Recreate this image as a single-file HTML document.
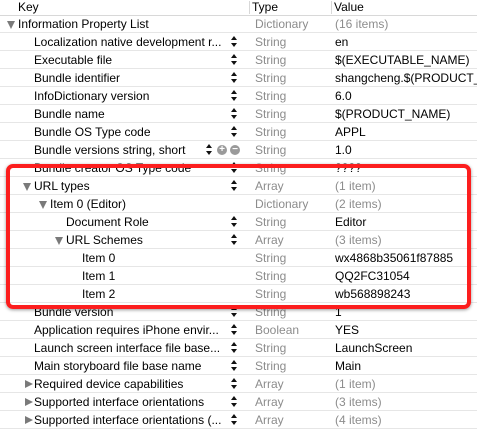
<!DOCTYPE html>
<html><head><meta charset="utf-8"><style>
body{margin:0;width:477px;height:438px;background:#fff;overflow:hidden;font-family:"Liberation Sans",sans-serif;font-size:12px;color:#000;position:relative}
.hdr{position:absolute;left:0;top:0;width:477px;height:15px;border-bottom:1px solid #d8d8d8;background:#fff}
.hdr span{position:absolute;top:0;line-height:15px;font-size:12px}
.sep{position:absolute;top:1px;width:1px;height:13px;background:#d8d8d8}
.row{position:absolute;left:0;width:477px;height:18px;border-bottom:1px solid #e6e6e6;box-sizing:border-box;overflow:hidden}
.row span{position:absolute;top:0;line-height:18px;white-space:nowrap}
.t{left:255px;color:#8c8c8c}
.v{left:335px}
.g{color:#8c8c8c}
.tri{position:absolute;top:6px;width:0;height:0}
.down{border-left:4.5px solid transparent;border-right:4.5px solid transparent;border-top:8px solid #7a7a7a}
.right{border-top:4.5px solid transparent;border-bottom:4.5px solid transparent;border-left:8px solid #7a7a7a;top:4.5px}
.st{position:absolute;left:231px;top:3px;width:7px;height:12px}
.st:before{content:"";position:absolute;left:0;top:0;border-left:3.5px solid transparent;border-right:3.5px solid transparent;border-bottom:4px solid #111}
.st:after{content:"";position:absolute;left:0;top:7px;border-left:3.5px solid transparent;border-right:3.5px solid transparent;border-top:4px solid #111}
.pm{position:absolute;top:4px;width:10px;height:10px;border-radius:50%;background:#9a9a9a;color:#fff;font-size:10px;line-height:10px;text-align:center;font-weight:bold}
.box{position:absolute;left:6px;top:164px;width:465px;height:145px;border:4px solid #fc1e1e;border-radius:7px;box-sizing:border-box;box-shadow:0 1px 3px rgba(0,0,0,.4)}
</style></head><body>
<div class="hdr"><span style="left:18px">Key</span><div class="sep" style="left:249px"></div><span style="left:252px">Type</span><div class="sep" style="left:331px"></div><span style="left:334px">Value</span></div>

<div class="row" style="top:15px"><div class="tri down" style="left:7px"></div><span style="left:18px">Information Property List</span><span class="t">Dictionary</span><span class="v g">(16 items)</span></div>
<div class="row" style="top:33px"><span style="left:34px">Localization native development r...</span><div class="st"></div><span class="t">String</span><span class="v">en</span></div>
<div class="row" style="top:51px"><span style="left:34px">Executable file</span><div class="st"></div><span class="t">String</span><span class="v">$(EXECUTABLE_NAME)</span></div>
<div class="row" style="top:69px"><span style="left:34px">Bundle identifier</span><div class="st"></div><span class="t">String</span><span class="v">shangcheng.$(PRODUCT_NAME)</span></div>
<div class="row" style="top:87px"><span style="left:34px">InfoDictionary version</span><div class="st"></div><span class="t">String</span><span class="v">6.0</span></div>
<div class="row" style="top:105px"><span style="left:34px">Bundle name</span><div class="st"></div><span class="t">String</span><span class="v">$(PRODUCT_NAME)</span></div>
<div class="row" style="top:123px"><span style="left:34px">Bundle OS Type code</span><div class="st"></div><span class="t">String</span><span class="v">APPL</span></div>
<div class="row" style="top:141px"><span style="left:34px">Bundle versions string, short</span><div class="st" style="left:206px"></div><div class="pm" style="left:217px">+</div><div class="pm" style="left:230px">−</div><span class="t">String</span><span class="v">1.0</span></div>
<div class="row" style="top:159px"><span style="left:34px">Bundle creator OS Type code</span><div class="st"></div><span class="t">String</span><span class="v">????</span></div>
<div class="row" style="top:177px"><div class="tri down" style="left:23px"></div><span style="left:34px">URL types</span><div class="st"></div><span class="t">Array</span><span class="v g">(1 item)</span></div>
<div class="row" style="top:195px"><div class="tri down" style="left:39px"></div><span style="left:50px">Item 0 (Editor)</span><span class="t">Dictionary</span><span class="v g">(2 items)</span></div>
<div class="row" style="top:213px"><span style="left:66px">Document Role</span><div class="st"></div><span class="t">String</span><span class="v">Editor</span></div>
<div class="row" style="top:231px"><div class="tri down" style="left:55px"></div><span style="left:66px">URL Schemes</span><div class="st"></div><span class="t">Array</span><span class="v g">(3 items)</span></div>
<div class="row" style="top:249px"><span style="left:82px">Item 0</span><span class="t">String</span><span class="v">wx4868b35061f87885</span></div>
<div class="row" style="top:267px"><span style="left:82px">Item 1</span><span class="t">String</span><span class="v">QQ2FC31054</span></div>
<div class="row" style="top:285px"><span style="left:82px">Item 2</span><span class="t">String</span><span class="v">wb568898243</span></div>
<div class="row" style="top:303px"><span style="left:34px">Bundle version</span><div class="st"></div><span class="t">String</span><span class="v">1</span></div>
<div class="row" style="top:321px"><span style="left:34px">Application requires iPhone envir...</span><div class="st"></div><span class="t">Boolean</span><span class="v">YES</span></div>
<div class="row" style="top:339px"><span style="left:34px">Launch screen interface file base...</span><div class="st"></div><span class="t">String</span><span class="v">LaunchScreen</span></div>
<div class="row" style="top:357px"><span style="left:34px">Main storyboard file base name</span><div class="st"></div><span class="t">String</span><span class="v">Main</span></div>
<div class="row" style="top:375px"><div class="tri right" style="left:25px"></div><span style="left:34px">Required device capabilities</span><div class="st"></div><span class="t">Array</span><span class="v g">(1 item)</span></div>
<div class="row" style="top:393px"><div class="tri right" style="left:25px"></div><span style="left:34px">Supported interface orientations</span><div class="st"></div><span class="t">Array</span><span class="v g">(3 items)</span></div>
<div class="row" style="top:411px"><div class="tri right" style="left:25px"></div><span style="left:34px">Supported interface orientations (...</span><div class="st"></div><span class="t">Array</span><span class="v g">(4 items)</span></div>

<div class="box"></div>
</body></html>
